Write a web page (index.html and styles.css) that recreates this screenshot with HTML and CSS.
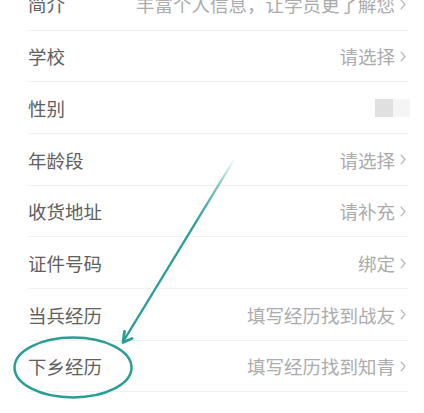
FILE: index.html
```html
<!DOCTYPE html>
<html lang="zh">
<head>
<meta charset="utf-8">
<title>个人资料</title>
<link rel="stylesheet" href="styles.css">
</head>
<body>
<div class="page">
  <ul class="list">
    <li class="row"><span class="label">简介</span><span class="value">丰富个人信息，让学员更了解您</span><svg class="chev" viewBox="0 0 6 11"><polyline points="0.8,0.8 5,5.5 0.8,10.2"/></svg></li>
    <li class="row"><span class="label">学校</span><span class="value">请选择</span><svg class="chev" viewBox="0 0 6 11"><polyline points="0.8,0.8 5,5.5 0.8,10.2"/></svg></li>
    <li class="row"><span class="label">性别</span><span class="switch"><span class="knob"></span><span class="track"></span></span></li>
    <li class="row"><span class="label">年龄段</span><span class="value">请选择</span><svg class="chev" viewBox="0 0 6 11"><polyline points="0.8,0.8 5,5.5 0.8,10.2"/></svg></li>
    <li class="row"><span class="label">收货地址</span><span class="value">请补充</span><svg class="chev" viewBox="0 0 6 11"><polyline points="0.8,0.8 5,5.5 0.8,10.2"/></svg></li>
    <li class="row"><span class="label">证件号码</span><span class="value">绑定</span><svg class="chev" viewBox="0 0 6 11"><polyline points="0.8,0.8 5,5.5 0.8,10.2"/></svg></li>
    <li class="row"><span class="label">当兵经历</span><span class="value">填写经历找到战友</span><svg class="chev" viewBox="0 0 6 11"><polyline points="0.8,0.8 5,5.5 0.8,10.2"/></svg></li>
    <li class="row"><span class="label">下乡经历</span><span class="value">填写经历找到知青</span><svg class="chev" viewBox="0 0 6 11"><polyline points="0.8,0.8 5,5.5 0.8,10.2"/></svg></li>
  </ul>
  <svg class="annot" viewBox="0 0 424 413" width="424" height="413">
    <defs>
      <linearGradient id="fade" gradientUnits="userSpaceOnUse" x1="235" y1="158" x2="123" y2="342">
        <stop offset="0" stop-color="#2a9d95" stop-opacity="0"/>
        <stop offset="0.15" stop-color="#2a9d95" stop-opacity="0.6"/>
        <stop offset="0.35" stop-color="#2a9d95" stop-opacity="1"/>
        <stop offset="1" stop-color="#2a9d95" stop-opacity="1"/>
      </linearGradient>
    </defs>
    <line x1="235" y1="158" x2="123.5" y2="341" stroke="url(#fade)" stroke-width="2.4" stroke-linecap="round"/>
    <polyline points="124.5,331.5 123,342.5 132,338.5" fill="none" stroke="#2a9d95" stroke-width="2.8" stroke-linecap="round" stroke-linejoin="round"/>
    <ellipse cx="73" cy="367.5" rx="58.5" ry="30" fill="none" stroke="#2a9d95" stroke-width="2.5"/>
  </svg>
</div>
</body>
</html>
```

FILE: styles.css
```css
html, body {
  margin: 0;
  padding: 0;
  background: #ffffff;
}

.page {
  position: relative;
  width: 424px;
  height: 413px;
  overflow: hidden;
  font-family: "Noto Sans CJK SC", "Noto Sans", sans-serif;
}

.list {
  list-style: none;
  margin: -21.2px 0 0 0;
  padding: 0;
}

.row {
  box-sizing: border-box;
  height: 51.71px;
  margin: 0 15px 0 28px;
  padding-right: 3px;
  border-bottom: 1px solid #f1f1f1;
  display: flex;
  align-items: center;
}

.label {
  flex: 1;
  font-size: 18.5px;
  color: #606060;
  line-height: 1;
  padding-top: 1px;
}

.value {
  font-size: 18.5px;
  color: #ababab;
  line-height: 1;
  padding-top: 1px;
  margin-right: 5px;
  white-space: nowrap;
}

.chev {
  width: 6px;
  height: 11px;
  flex: none;
  margin-top: 1px;
}

.chev polyline {
  fill: none;
  stroke: #bdbdbd;
  stroke-width: 1.3;
}

.switch {
  display: flex;
  height: 18px;
  margin-right: -4px;
  margin-top: 1px;
}

.knob {
  width: 18px;
  height: 18px;
  background: #e0e0e0;
}

.track {
  width: 17px;
  height: 18px;
  background: #f5f5f5;
}

.annot {
  position: absolute;
  left: 0;
  top: 0;
  pointer-events: none;
}
```
